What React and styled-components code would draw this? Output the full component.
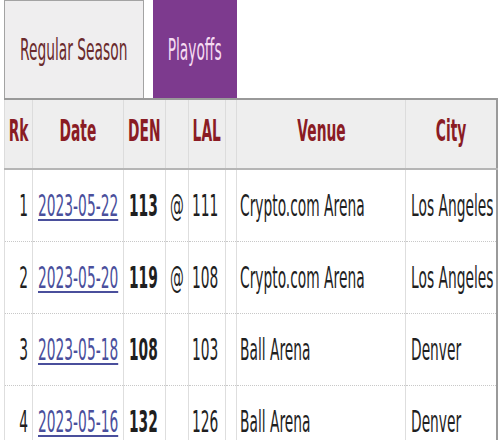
import React from "react";
import styled, { createGlobalStyle, css } from "styled-components";

const Global = createGlobalStyle`
  html, body { margin: 0; padding: 0; background: #ffffff; }
  body { font-family: "DejaVu Sans", Verdana, sans-serif; }
`;

const SQUEEZE = 0.46;

const Page = styled.div`
  width: 500px;
  height: 440px;
  overflow: hidden;
  padding: 0 2px 0 4px;
  box-sizing: border-box;
`;

const Tabs = styled.div`
  display: flex;
  gap: 9px;
  height: 98px;
`;

const Tab = styled.div`
  display: flex;
  align-items: center;
  justify-content: center;
  box-sizing: border-box;
  width: ${(p) => p.$w}px;
  font-size: 30px;
  ${(p) =>
    p.$active
      ? css`
          background: #7d3a8e;
          color: #f6dcf2;
        `
      : css`
          background: #efeeef;
          color: #6a2a2c;
          border: 1px solid #a3a3a3;
          border-bottom: none;
        `}
`;

const Fit = styled.div`
  display: flex;
  justify-content: ${(p) =>
    p.$align === "right" ? "flex-end" : p.$align === "center" ? "center" : "flex-start"};
`;

const Squeeze = styled.span`
  display: inline-block;
  white-space: nowrap;
  flex: none;
  transform: scaleX(${SQUEEZE});
  transform-origin: ${(p) => (p.$align === "right" ? "right" : p.$align === "center" ? "center" : "left")} center;
`;

const Table = styled.table`
  border-collapse: collapse;
  table-layout: fixed;
  width: 494px;
  border-top: 2px solid #999999;
  border-right: 2px solid #9a9a9a;
  border-left: 1px solid #8f8f8f;
  font-size: 30px;
  color: #1f1f1f;
`;

const HeadCell = styled.th`
  background: #eeeeee;
  color: #8a1c24;
  font-weight: bold;
  height: 60px;
  padding: 0 0 8px 0;
  border-left: 1px solid #dcdcdc;
  border-bottom: 2px solid #b5b5b5;
  overflow: visible;
`;

const Row = styled.tr`
  border-bottom: 1px dotted #c8c8c8;
  &:last-child { border-bottom: none; }
`;

const Cell = styled.td`
  height: 71px;
  padding: 0 ${(p) => p.$pr ?? 0}px 0 ${(p) => p.$pl ?? 0}px;
  border-left: 1px solid #dedede;
  font-weight: ${(p) => (p.$bold ? "bold" : "normal")};
  overflow: visible;
`;

const DateLink = styled.a`
  color: #4a4f9c;
  text-decoration: underline;
  text-decoration-thickness: 2px;
  text-underline-offset: 3px;
`;

const cols = [28, 91, 42, 23, 37, 11, 169, 91];

const headers = [
  { t: "Rk", a: "center" },
  { t: "Date", a: "center" },
  { t: "DEN", a: "center" },
  { t: "", a: "center" },
  { t: "LAL", a: "center" },
  { t: "", a: "center" },
  { t: "Venue", a: "center" },
  { t: "City", a: "center" },
];

const games = [
  { rk: 1, date: "2023-05-22", den: 113, at: "@", lal: 111, venue: "Crypto.com Arena", city: "Los Angeles" },
  { rk: 2, date: "2023-05-20", den: 119, at: "@", lal: 108, venue: "Crypto.com Arena", city: "Los Angeles" },
  { rk: 3, date: "2023-05-18", den: 108, at: "", lal: 103, venue: "Ball Arena", city: "Denver" },
  { rk: 4, date: "2023-05-16", den: 132, at: "", lal: 126, venue: "Ball Arena", city: "Denver" },
];

const Txt = ({ align, children }) => (
  <Fit $align={align}>
    <Squeeze $align={align}>{children}</Squeeze>
  </Fit>
);

export default function App() {
  return (
    <>
      <Global />
      <Page>
        <Tabs>
          <Tab $w={140}>
            <Txt align="center">Regular Season</Txt>
          </Tab>
          <Tab $w={84} $active>
            <Txt align="center">Playoffs</Txt>
          </Tab>
        </Tabs>
        <Table>
          <colgroup>
            {cols.map((w, i) => (
              <col key={i} style={{ width: w }} />
            ))}
          </colgroup>
          <thead>
            <tr>
              {headers.map((h, i) => (
                <HeadCell key={i}>
                  <Txt align={h.a}>{h.t}</Txt>
                </HeadCell>
              ))}
            </tr>
          </thead>
          <tbody>
            {games.map((g) => (
              <Row key={g.rk}>
                <Cell $pr={4}>
                  <Txt align="right">{g.rk}</Txt>
                </Cell>
                <Cell $pl={5}>
                  <Txt align="left">
                    <DateLink href="#">{g.date}</DateLink>
                  </Txt>
                </Cell>
                <Cell $pl={5} $bold>
                  <Txt align="left">{g.den}</Txt>
                </Cell>
                <Cell>
                  <Txt align="center">{g.at}</Txt>
                </Cell>
                <Cell $pr={7}>
                  <Txt align="right">{g.lal}</Txt>
                </Cell>
                <Cell />
                <Cell $pl={3}>
                  <Txt align="left">{g.venue}</Txt>
                </Cell>
                <Cell $pl={5}>
                  <Txt align="left">{g.city}</Txt>
                </Cell>
              </Row>
            ))}
          </tbody>
        </Table>
      </Page>
    </>
  );
}
